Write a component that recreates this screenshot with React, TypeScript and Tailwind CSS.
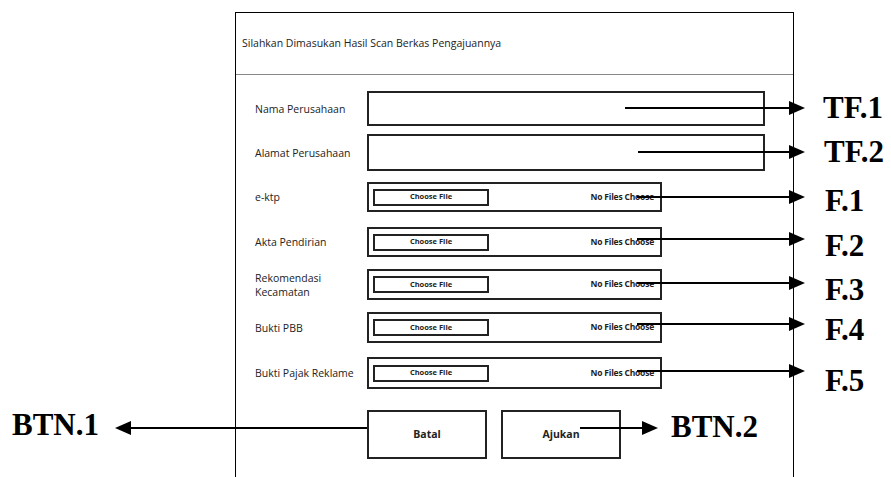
const rows = [
  { label: 'e-ktp', mt: 'mt-[11px]', h: 'h-[30px]' },
  { label: 'Akta Pendirian', mt: 'mt-[15px]', h: 'h-[30px]' },
  { label: 'Rekomendasi\nKecamatan', mt: 'mt-[12px]', h: 'h-[31px]' },
  { label: 'Bukti PBB', mt: 'mt-[12px]', h: 'h-[31px]' },
  { label: 'Bukti Pajak Reklame', mt: 'mt-[14px]', h: 'h-[32px]' },
];

// annotation arrows: [x1, x2, y] (x2 = arrow tip)
const arrows: [number, number, number][] = [
  [625, 805, 108],
  [638, 805, 152],
  [637, 805, 197],
  [637, 805, 239],
  [637, 805, 283],
  [637, 805, 324],
  [637, 805, 371],
  [580, 658, 428],
  [367, 115, 428],
];

const tags = [
  { text: 'TF.1', cls: 'left-[823px] top-[92px]' },
  { text: 'TF.2', cls: 'left-[824px] top-[136px]' },
  { text: 'F.1', cls: 'left-[825px] top-[185px]' },
  { text: 'F.2', cls: 'left-[825px] top-[230px]' },
  { text: 'F.3', cls: 'left-[825px] top-[274px]' },
  { text: 'F.4', cls: 'left-[825px] top-[314px]' },
  { text: 'F.5', cls: 'left-[825px] top-[365px]' },
  { text: 'BTN.1', cls: 'left-[12px] top-[409px]' },
  { text: 'BTN.2', cls: 'left-[671px] top-[411px]' },
];

function Label({ text }: { text: string }) {
  return (
    <div className="w-[112px] shrink-0 whitespace-pre-line text-[10.5px] leading-[14px] text-[#222]">
      {text}
    </div>
  );
}

export default function App() {
  return (
    <div className="relative w-[891px] h-[477px] overflow-hidden bg-white font-['Open_Sans',sans-serif]">
      {/* Form frame */}
      <div className="ml-[235px] mt-[12px] w-[559px] h-[470px] border-x border-t border-black">
        <div className="h-[62px] border-b border-[#888] flex items-center pl-[6px] text-[10.5px] text-[#222]">
          Silahkan Dimasukan Hasil Scan Berkas Pengajuannya
        </div>

        <div className="pl-[19px]">
          <div className="mt-[16px] flex items-center">
            <Label text="Nama Perusahaan" />
            <div className="w-[398px] h-[35px] border-2 border-[#222]" />
          </div>
          <div className="mt-[8px] flex items-center">
            <Label text="Alamat Perusahaan" />
            <div className="w-[398px] h-[37px] border-2 border-[#222]" />
          </div>

          {rows.map((r) => (
            <div key={r.label} className={`${r.mt} flex items-center`}>
              <Label text={r.label} />
              <div className={`${r.h} w-[295px] border-2 border-[#222] flex items-center pl-[4px] pr-[6px]`}>
                <div className="w-[116px] h-[17px] border-2 border-[#222] flex items-center justify-center text-[7.5px] font-bold text-[#222]">
                  Choose File
                </div>
                <div className="ml-auto text-[8.5px] font-bold text-[#222] tracking-[-0.2px]">
                  No Files Choose
                </div>
              </div>
            </div>
          ))}

          <div className="mt-[21px] flex">
            <div className="w-[112px] shrink-0" />
            <div className="flex gap-[14px]">
              <button className="w-[120px] h-[49px] border-2 border-[#222] text-[10.5px] font-bold text-[#222]">
                Batal
              </button>
              <button className="w-[120px] h-[49px] border-2 border-[#222] text-[10.5px] font-bold text-[#222]">
                Ajukan
              </button>
            </div>
          </div>
        </div>
      </div>

      {/* Annotation arrows */}
      <svg className="absolute inset-0 pointer-events-none" width={891} height={477}>
        {arrows.map(([x1, x2, y], i) => {
          const dir = x2 > x1 ? 1 : -1;
          const base = x2 - dir * 16;
          return (
            <g key={i}>
              <line x1={x1} y1={y} x2={base} y2={y} stroke="#000" strokeWidth={2} />
              <polygon points={`${base},${y - 7} ${x2},${y} ${base},${y + 7}`} fill="#000" />
            </g>
          );
        })}
      </svg>

      {tags.map((t) => (
        <div
          key={t.text}
          className={`absolute ${t.cls} font-['Liberation_Serif',serif] font-bold text-[31px] leading-none text-black`}
        >
          {t.text}
        </div>
      ))}
    </div>
  );
}
